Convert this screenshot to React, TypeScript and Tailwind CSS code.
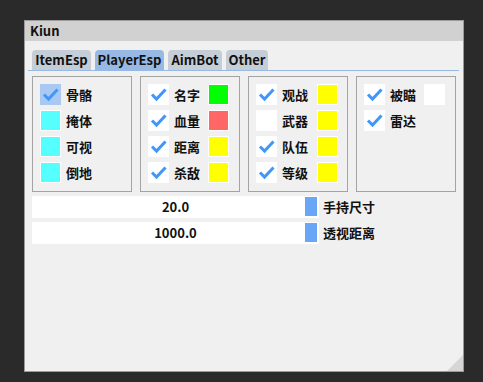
import React from "react";

const font = { fontFamily: '"Noto Sans CJK SC", "Noto Sans", sans-serif' };

function Check({ on, hover }: { on: boolean; hover?: boolean }) {
  return (
    <div className={`w-[21px] h-[21px] shrink-0 ${hover ? "bg-[#a9c9f2]" : "bg-white"}`}>
      {on && (
        <svg width="21" height="21" viewBox="0 0 21 21">
          <polyline points="4,10.5 8.5,15 17.5,5.5" fill="none" stroke="#4296fa" strokeWidth="3" />
        </svg>
      )}
    </div>
  );
}

function Swatch({ color }: { color: string }) {
  return <div className="w-[21px] h-[21px] shrink-0 border border-white" style={{ background: color }} />;
}

type Row = { label: string; check?: boolean | null; hover?: boolean; color?: string; pre?: string };

function Box({ rows, tw }: { rows: Row[]; tw: string }) {
  return (
    <div className="w-[100px] h-[116px] border border-[#a3a3a3] pt-[7px] pl-[7px] flex flex-col gap-[5px]">
      {rows.map((r, i) => (
        <div key={i} className="flex items-center h-[21px]">
          {r.pre ? <Swatch color={r.pre} /> : <Check on={!!r.check} hover={r.hover} />}
          <div className={`ml-[5px] ${tw} text-[13px] font-bold leading-none text-[#111]`}>{r.label}</div>
          {r.color && <Swatch color={r.color} />}
        </div>
      ))}
    </div>
  );
}

function Slider({ value, label }: { value: string; label: string }) {
  return (
    <div className="flex items-center h-[22px]">
      <div className="relative w-[287px] h-[22px] bg-white flex items-center justify-center text-[13px] font-bold text-[#111]">
        {value}
        <div className="absolute right-[2px] top-[1px] w-[12px] h-[19px] bg-[#6aa6f6]" />
      </div>
      <div className="ml-[4px] text-[13px] font-bold text-[#111]">{label}</div>
    </div>
  );
}

export default function App() {
  const tabs = [
    { t: "ItemEsp", w: "w-[59px]", a: false },
    { t: "PlayerEsp", w: "w-[69px]", a: true },
    { t: "AimBot", w: "w-[54px]", a: false },
    { t: "Other", w: "w-[42px]", a: false },
  ];
  return (
    <div className="w-[483px] h-[382px] bg-[#2a2a2a] pt-[20px] pl-[24px]" style={font}>
      <div className="relative w-[440px] h-[352px] border border-[#9a9a9a] bg-[#f0f0f0] flex flex-col">
        <div className="h-[20px] bg-[#d1d1d1] pl-[5px] flex items-center text-[13px] font-bold text-[#111]">Kiun</div>
        <div className="flex gap-[4px] pl-[7px] mt-[9px]">
          {tabs.map((t) => (
            <div
              key={t.t}
              className={`${t.w} h-[20px] rounded-t-[4px] flex items-center justify-center text-[13px] font-bold text-[#111] ${t.a ? "bg-[#97b9e3]" : "bg-[#c5cdd7]"}`}
            >
              {t.t}
            </div>
          ))}
        </div>
        <div className="ml-[3px] w-[431px] h-[1px] bg-[#97b9e3]" />
        <div className="flex gap-[8px] pl-[7px] mt-[5px]">
          <Box
            tw="w-[34px]"
            rows={[
              { label: "骨骼", check: true, hover: true },
              { label: "掩体", pre: "#55ffff" },
              { label: "可视", pre: "#55ffff" },
              { label: "倒地", pre: "#55ffff" },
            ]}
          />
          <Box
            tw="w-[34px]"
            rows={[
              { label: "名字", check: true, color: "#00ff00" },
              { label: "血量", check: true, color: "#ff6666" },
              { label: "距离", check: true, color: "#ffff00" },
              { label: "杀敌", check: true, color: "#ffff00" },
            ]}
          />
          <Box
            tw="w-[35px]"
            rows={[
              { label: "观战", check: true, color: "#ffff00" },
              { label: "武器", check: false, color: "#ffff00" },
              { label: "队伍", check: true, color: "#ffff00" },
              { label: "等级", check: true, color: "#ffff00" },
            ]}
          />
          <Box
            tw="w-[34px]"
            rows={[
              { label: "被瞄", check: true, color: "#ffffff" },
              { label: "雷达", check: true },
            ]}
          />
        </div>
        <div className="flex flex-col gap-[4px] pl-[7px] mt-[4px]">
          <Slider value="20.0" label="手持尺寸" />
          <Slider value="1000.0" label="透视距离" />
        </div>
        <div className="absolute right-0 bottom-0 w-[16px] h-[16px] bg-[#d6d6d6] [clip-path:polygon(100%_0,100%_100%,0_100%)]" />
      </div>
    </div>
  );
}
